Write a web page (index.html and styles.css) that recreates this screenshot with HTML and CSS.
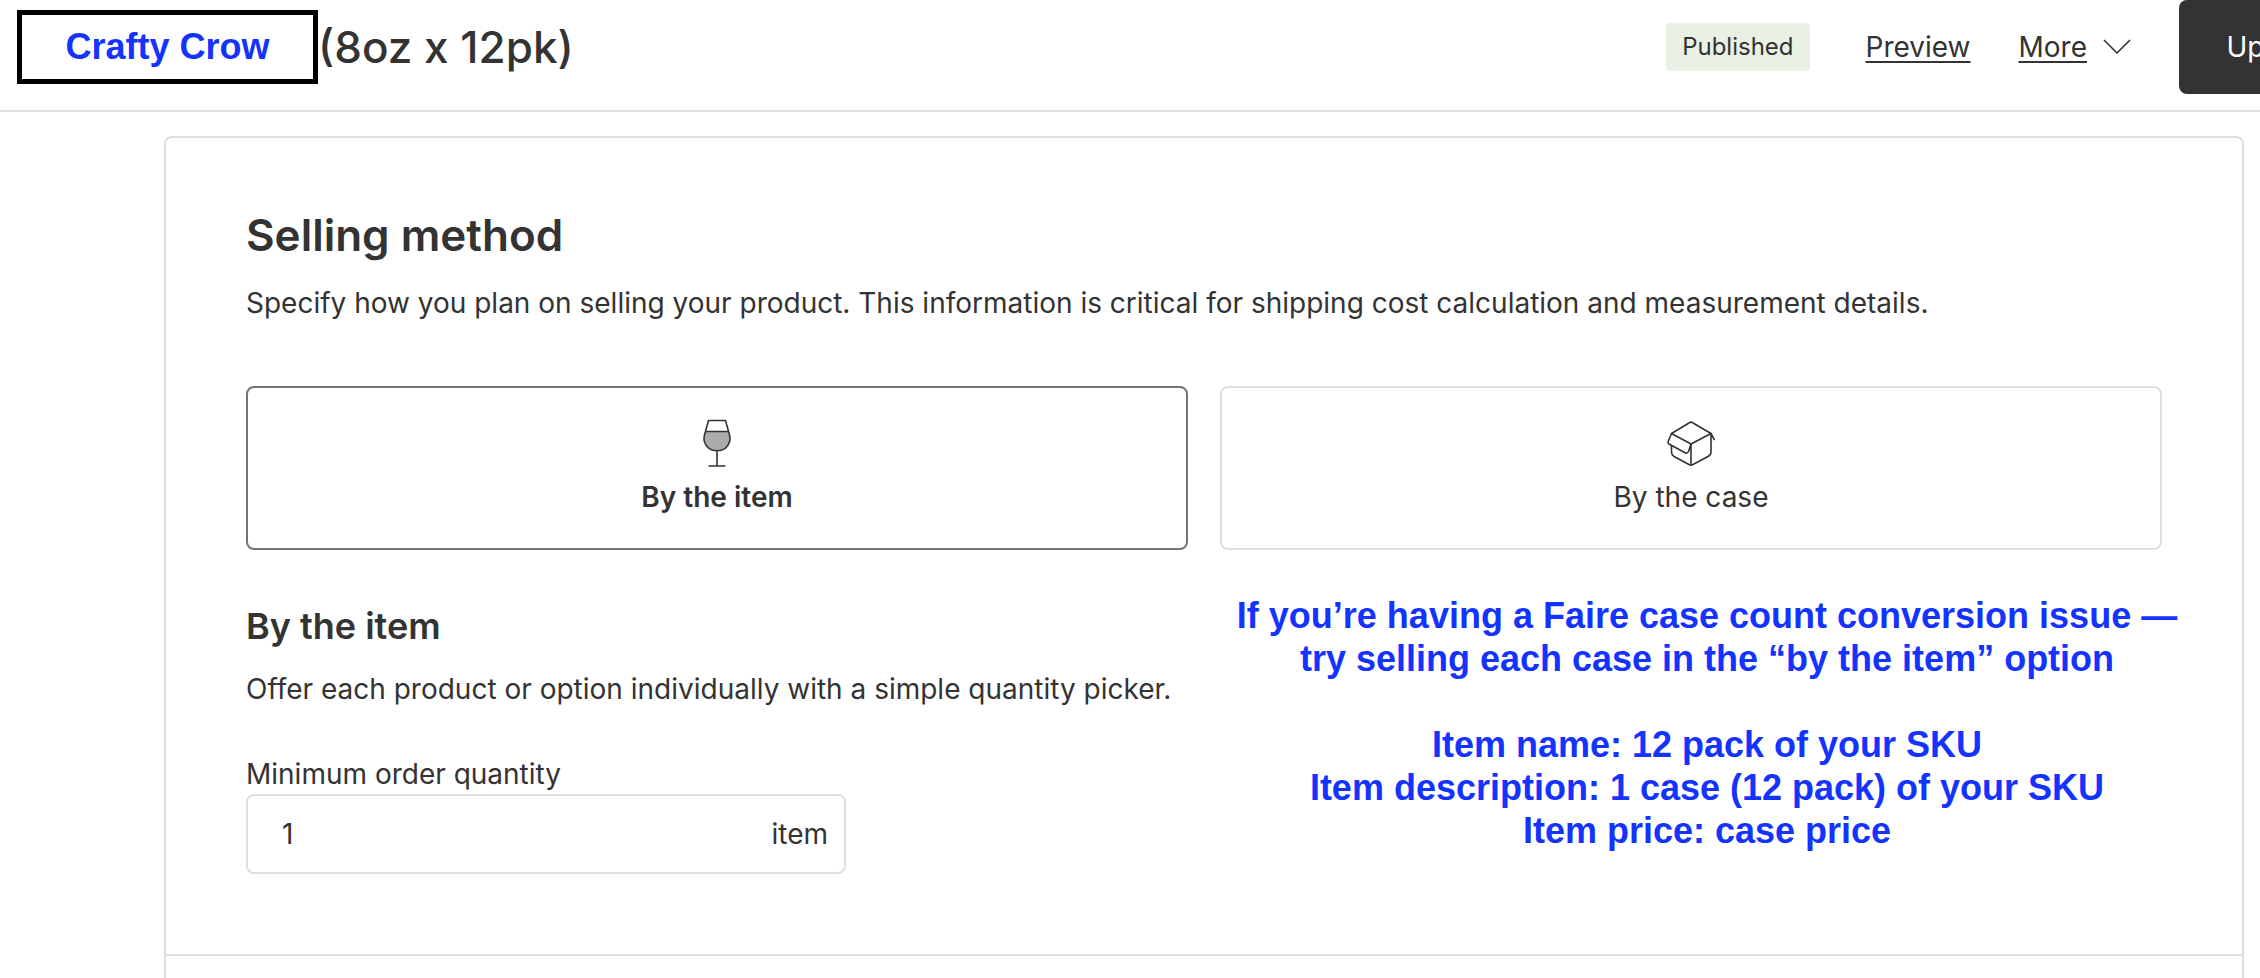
FILE: index.html
```html
<!DOCTYPE html>
<html lang="en">

<head>
    <meta charset="UTF-8">
    <meta name="viewport" content="width=device-width, initial-scale=1.0">
    <title>Crafty Crow (8oz x 12pk)</title>
    <link rel="stylesheet" href="styles.css">
</head>

<body>
    <header class="topbar">
        <div class="brand">Crafty Crow</div>
        <h1>(8oz x 12pk)</h1>
        <div class="actions">
            <span class="badge">Published</span>
            <a class="preview" href="#">Preview</a>
            <button type="button" class="more">
                <span>More</span>
                <svg width="28" height="16" viewBox="0 0 28 16" aria-hidden="true">
                    <path d="M1 1 L14 14 L27 1" />
                </svg>
            </button>
            <button type="button" class="update">Update</button>
        </div>
    </header>

    <main class="card">
        <section class="selling">
            <h2>Selling method</h2>
            <p>Specify how you plan on selling your product. This information is critical for shipping cost calculation and measurement details.</p>

            <div class="options">
                <label class="option">
                    <input type="radio" name="method" value="item" checked>
                    <svg width="48" height="50" viewBox="0 0 48 50" aria-hidden="true">
                        <defs>
                            <pattern id="dots" width="4" height="4" patternUnits="userSpaceOnUse" stroke="none">
                                <rect width="4" height="4" fill="#afafaf" />
                                <circle cx="1" cy="1" r="0.5" fill="#8c8c8c" />
                                <circle cx="3" cy="3" r="0.5" fill="#8c8c8c" />
                            </pattern>
                        </defs>
                        <path fill="url(#dots)" stroke="none" d="M12.5 13.5 H35.5 C37 18 37.5 21 36.5 24 C34.5 30 30 32.8 24 32.8 C18 32.8 13.5 30 11.5 24 C10.5 21 11 18 12.5 13.5 Z" />
                        <path d="M15.5 2.5 H32.5 L35.7 14 C37 18 37.5 21 36.5 24 C34.5 30 30 32.8 24 32.8 C18 32.8 13.5 30 11.5 24 C10.5 21 11 18 12.3 14 Z" />
                        <path d="M12.3 13.5 H35.7 M24 32.8 V48 M15.5 48 H32.5" />
                    </svg>
                    <span>By the item</span>
                </label>
                <label class="option">
                    <input type="radio" name="method" value="case">
                    <svg width="48" height="50" viewBox="0 0 48 50" aria-hidden="true">
                        <path d="M4.5 15.5 L22 5 Q24 3.3 26 5 L44 15.5 L24 26 Z" />
                        <path d="M4.5 15.5 L1 24 Q1 25.5 2 26 L18.5 35 Q20.5 35.5 21.5 33.5 L24 26 V47" />
                        <path d="M4.5 27 V34 Q4.5 37 7 38.5 L22 46.5 Q24 47.8 26 46.5 L41 38.5 Q44 37 44 34 V15.5 L47.5 22" />
                    </svg>
                    <span>By the case</span>
                </label>
            </div>

            <div class="details">
                <div class="quantity">
                    <h3>By the item</h3>
                    <p>Offer each product or option individually with a simple quantity picker.</p>
                    <label for="minQty">Minimum order quantity</label>
                    <div class="field">
                        <input type="text" id="minQty" name="minQty" inputmode="numeric" value="1">
                        <span>item</span>
                    </div>
                </div>
                <div class="note">
                    <p>If you’re having a Faire case count conversion issue —<br>try selling each case in the “by the item” option</p>
                    <p>Item name: 12 pack of your SKU<br>Item description: 1 case (12 pack) of your SKU<br>Item price: case price</p>
                </div>
            </div>
        </section>
    </main>
</body>

</html>
```
FILE: styles.css
```css
* {
    box-sizing: border-box;
}

body {
    display: flex;
    flex-direction: column;
    min-height: 100vh;
    margin: 0;
    overflow-x: hidden;
    background-color: #fff;
    color: #333;
    font-family: Inter, "Liberation Sans", sans-serif;
    font-size: 28px;
    line-height: 42px;
}

h1,
h2,
h3,
p {
    margin: 0;
    font-weight: 400;
}

input,
button {
    color: inherit;
    font: inherit;
}

svg {
    fill: none;
    stroke: #333;
    stroke-width: 1.6;
    stroke-linejoin: round;
}

/* Top bar */
.topbar {
    display: flex;
    align-items: flex-start;
    height: 112px;
    padding-left: 17px;
    border-bottom: 2px solid #dfdfdf;
}

.brand {
    width: 301px;
    height: 74px;
    margin-top: 10px;
    border: 5px solid #000;
    color: #1433ff;
    font-family: "Liberation Sans", Arial, sans-serif;
    font-size: 36px;
    font-weight: 700;
    line-height: 64px;
    text-align: center;
}

h1 {
    font-size: 44px;
    font-weight: 500;
    line-height: 94px;
    white-space: nowrap;
}

/* The update button runs past the right edge of the window */
.actions {
    display: flex;
    align-items: center;
    height: 94px;
    margin-left: auto;
    margin-right: -110px;
}

.badge {
    padding: 0 16px;
    border-radius: 4px;
    background-color: #e9f1e4;
    font-size: 24px;
    line-height: 48px;
}

.preview {
    margin-left: 56px;
    color: inherit;
    text-underline-offset: 4px;
}

.more {
    display: flex;
    align-items: center;
    gap: 16px;
    margin-left: 48px;
    padding: 0;
    border: none;
    background: none;
    text-decoration: underline;
    text-underline-offset: 4px;
    cursor: pointer;
}

.update {
    width: 191px;
    height: 94px;
    margin-left: 48px;
    border: none;
    border-radius: 8px;
    background-color: #333;
    color: #fff;
    cursor: pointer;
}

/* Card */
.card {
    flex: 1;
    margin: 24px 16px 0 164px;
    border: 2px solid #dfdfdf;
    border-bottom: none;
    border-radius: 8px 8px 0 0;
}

.selling {
    padding: 70px 80px 80px;
    border-bottom: 2px solid #dfdfdf;
}

h2 {
    margin-bottom: 20px;
    font-size: 44px;
    font-weight: 600;
    line-height: 54px;
}

.options {
    display: grid;
    grid-template-columns: 1fr 1fr;
    gap: 32px;
    margin-top: 62px;
}

.option {
    position: relative;
    display: flex;
    flex-direction: column;
    align-items: center;
    gap: 8px;
    padding: 30px;
    border: 2px solid #dfdfdf;
    border-radius: 8px;
    cursor: pointer;
}

.option input {
    position: absolute;
    opacity: 0;
}

.option:has(input:checked) {
    border-color: #757575;
    font-weight: 600;
}

/* Details under the options */
.details {
    display: grid;
    grid-template-columns: 1fr 1fr;
    gap: 32px;
    margin-top: 44px;
}

.quantity {
    padding-top: 10px;
    white-space: nowrap;
}

h3 {
    margin-bottom: 20px;
    font-size: 36px;
    font-weight: 600;
    line-height: 44px;
}

.quantity label {
    display: block;
    margin-top: 44px;
    line-height: 40px;
}

.field {
    display: flex;
    align-items: center;
    width: 600px;
    max-width: 100%;
    height: 80px;
    padding: 0 16px 0 34px;
    border: 2px solid #dfdfdf;
    border-radius: 8px;
}

.field input {
    flex: 1;
    min-width: 0;
    padding: 0;
    border: none;
    outline: none;
    background: none;
}

.note {
    margin-right: -32px;
    color: #1433ff;
    font-family: "Liberation Sans", Arial, sans-serif;
    font-size: 36px;
    line-height: 43px;
    text-align: center;
}

.note p {
    margin-bottom: 43px;
    font-weight: 700;
}

.note p:last-child {
    margin-bottom: 0;
}
```
